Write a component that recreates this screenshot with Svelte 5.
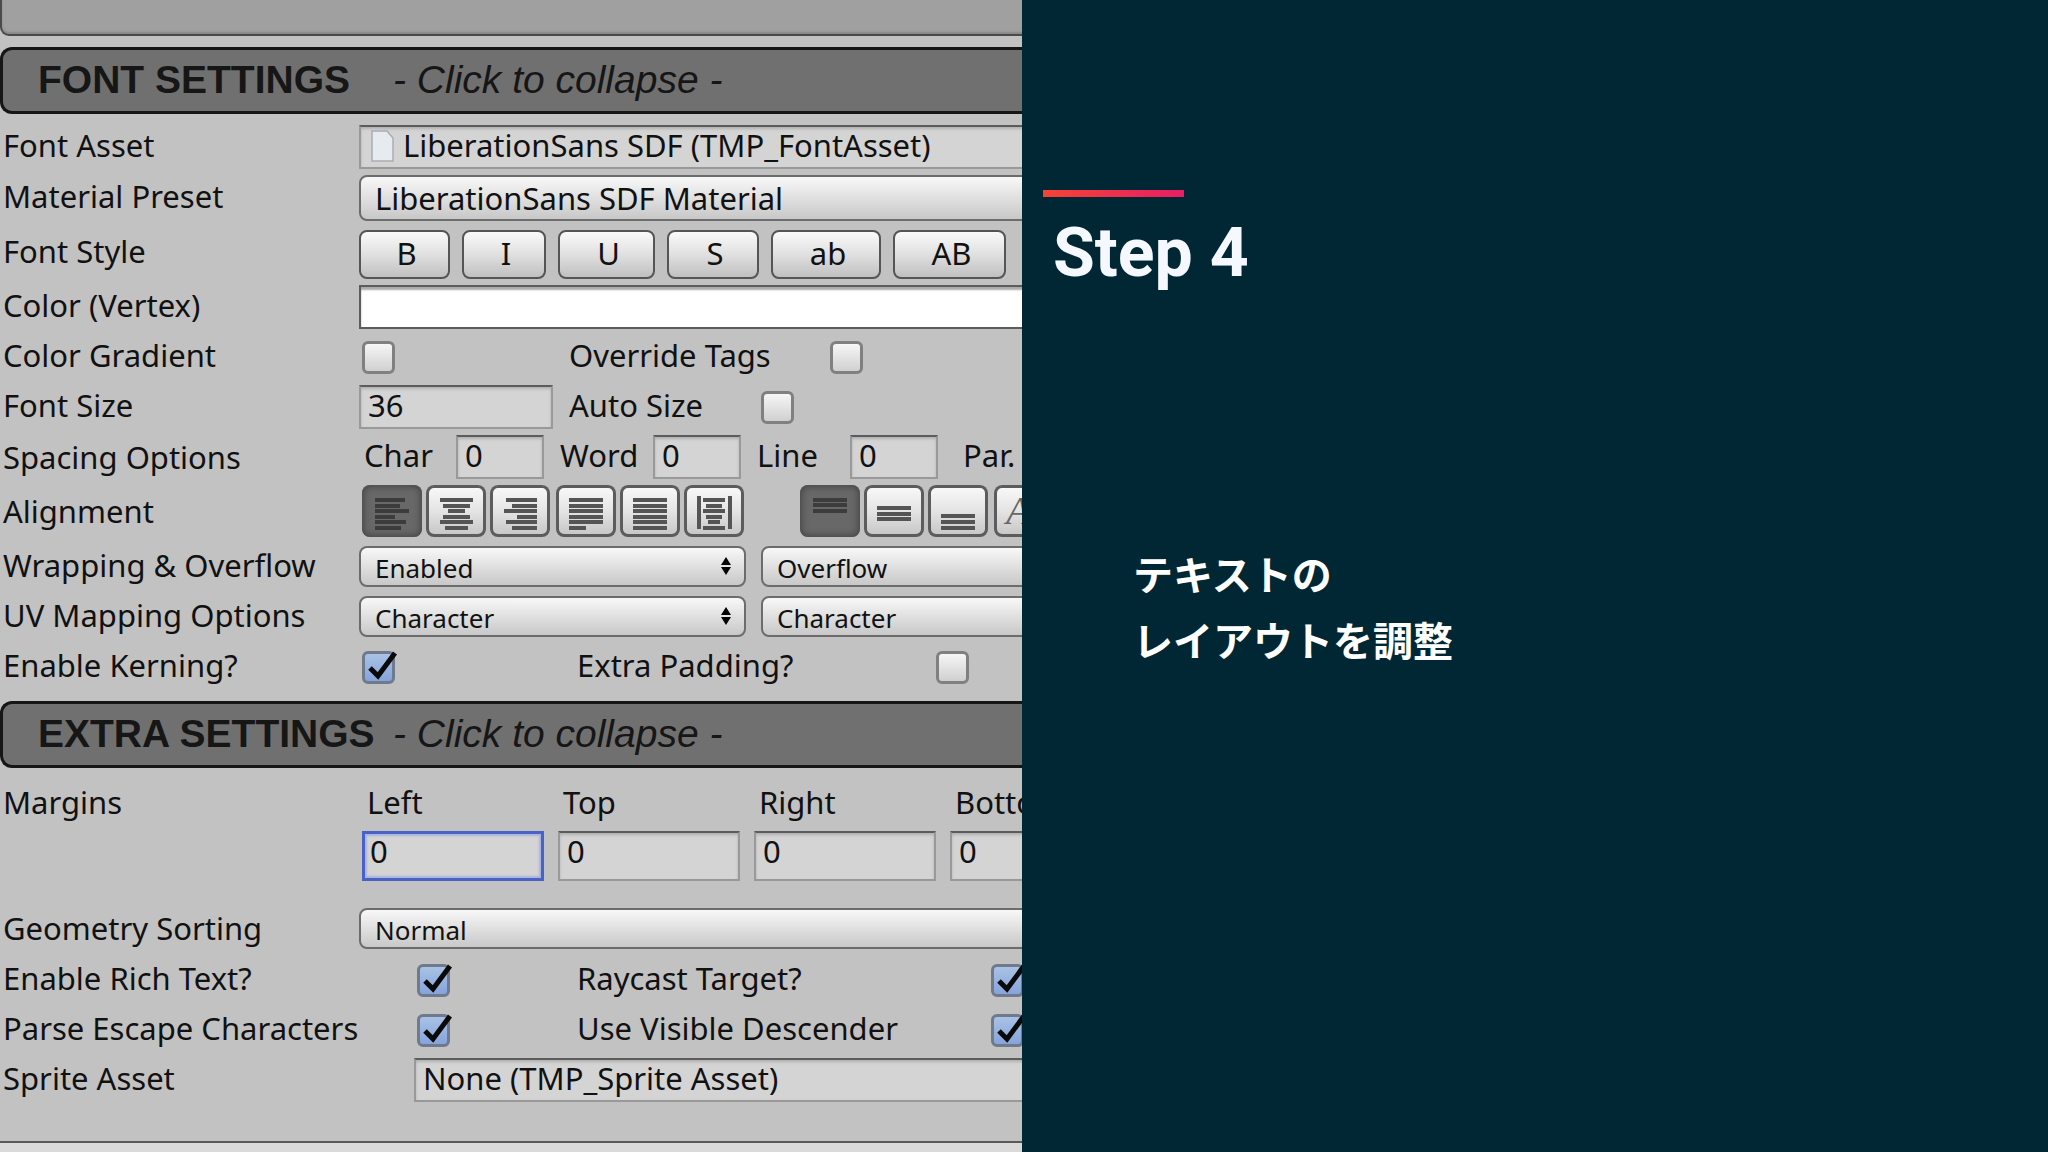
<script>
    let kerning = true;
    let richText = true;
    let parseEscape = true;
    let raycast = true;
    let descender = true;
    let horizontal = "left";
    let vertical = "top";

    const styles = [
        { text: "B", width: 91 },
        { text: "I", width: 84 },
        { text: "U", width: 97 },
        { text: "S", width: 92 },
        { text: "ab", width: 110 },
        { text: "AB", width: 113 },
    ];

    // each line is [x1, x2, y]
    const horizontalAlign = [
        {
            name: "left",
            lines: [[13, 43, 15], [13, 38, 21], [13, 47, 26], [13, 33, 32], [13, 44, 37], [13, 39, 43]],
        },
        {
            name: "center",
            lines: [[14, 47, 15], [17, 44, 21], [22, 39, 26], [17, 44, 32], [14, 47, 37], [19, 42, 43]],
        },
        {
            name: "right",
            lines: [[16, 47, 15], [22, 47, 21], [14, 47, 26], [27, 47, 32], [16, 47, 37], [22, 47, 43]],
        },
        {
            name: "justified",
            lines: [[13, 47, 15], [13, 47, 21], [13, 47, 26], [13, 47, 32], [13, 47, 37], [13, 30, 43]],
        },
        {
            name: "flush",
            lines: [[13, 47, 15], [13, 47, 21], [13, 47, 26], [13, 47, 32], [13, 47, 37], [13, 47, 43]],
        },
        {
            name: "geometry",
            bars: true,
            lines: [[19, 41, 15], [22, 38, 21], [19, 41, 26], [22, 38, 32], [24, 36, 37], [19, 41, 43]],
        },
    ];

    const verticalAlign = [
        { name: "top", lines: [[13, 47, 15], [13, 47, 20], [13, 47, 26]] },
        { name: "middle", lines: [[13, 47, 23], [13, 47, 29], [13, 47, 34]] },
        { name: "bottom", lines: [[13, 47, 31], [13, 47, 37], [13, 47, 43]] },
    ];

    const spacing = ["Char", "Word", "Line", "Par."];
    const margins = ["Left", "Top", "Right", "Bottom"];
</script>

<main>
    <section class="inspector">
        <div class="sheet">
            <div class="textbox"></div>

            <button class="header">
                <b>FONT SETTINGS</b>
                <i>- Click to collapse -</i>
            </button>

            <div class="rows">
                <div class="row">
                    <label for="asset">Font Asset</label>
                    <div class="field object">
                        <svg width="24" height="32" viewBox="0 0 24 32">
                            <path d="M1 1h15l6 7v23H1z" fill="#e6ebf0" stroke="#a9adb2" stroke-width="1.5" />
                        </svg>
                        <input id="asset" value="LiberationSans SDF (TMP_FontAsset)" />
                    </div>
                </div>
                <div class="row">
                    <label for="preset">Material Preset</label>
                    <div class="drop large">
                        <select id="preset"><option>LiberationSans SDF Material</option></select>
                    </div>
                </div>
                <div class="row style-row">
                    <span class="label">Font Style</span>
                    <div class="styles">
                        {#each styles as s}
                            <button style="width: {s.width}px">{s.text}</button>
                        {/each}
                    </div>
                </div>
                <div class="row">
                    <span class="label">Color (Vertex)</span>
                    <button class="color" aria-label="Color (Vertex)"></button>
                </div>
                <div class="row">
                    <label for="gradient">Color Gradient</label>
                    <div class="checks override">
                        <span class="check"><input id="gradient" type="checkbox" /></span>
                        <label for="override">Override Tags</label>
                        <span class="check"><input id="override" type="checkbox" /></span>
                    </div>
                </div>
                <div class="row">
                    <label for="size">Font Size</label>
                    <div class="checks auto">
                        <input id="size" class="field" value="36" />
                        <label for="auto">Auto Size</label>
                        <span class="check"><input id="auto" type="checkbox" /></span>
                    </div>
                </div>
                <div class="row low">
                    <span class="label">Spacing Options</span>
                    <div class="spacing">
                        {#each spacing as name}
                            <label for={name}>{name}</label>
                            <input id={name} class="field" value="0" />
                        {/each}
                    </div>
                </div>
                <div class="row low">
                    <span class="label">Alignment</span>
                    <div class="align">
                        {#each [horizontalAlign.slice(0, 3), horizontalAlign.slice(3)] as group}
                            <div class="group">
                                {#each group as a}
                                    <button
                                        class:on={horizontal === a.name}
                                        aria-label={a.name}
                                        on:click={() => (horizontal = a.name)}
                                    >
                                        <svg width="60" height="52" viewBox="0 0 60 52">
                                            {#each a.lines as [x1, x2, y]}
                                                <path d="M{x1} {y}H{x2}" />
                                            {/each}
                                            {#if a.bars}
                                                <path d="M15 11V44M46 11V44" />
                                            {/if}
                                        </svg>
                                    </button>
                                {/each}
                            </div>
                        {/each}
                        <div class="group vertical">
                            {#each verticalAlign as a}
                                <button
                                    class:on={vertical === a.name}
                                    aria-label={a.name}
                                    on:click={() => (vertical = a.name)}
                                >
                                    <svg width="60" height="52" viewBox="0 0 60 52">
                                        {#each a.lines as [x1, x2, y]}
                                            <path d="M{x1} {y}H{x2}" />
                                        {/each}
                                    </svg>
                                </button>
                            {/each}
                        </div>
                        <div class="group">
                            <button class="baseline">A</button>
                        </div>
                    </div>
                </div>
                <div class="row low">
                    <label for="wrapping">Wrapping &amp; Overflow</label>
                    <div class="pair">
                        <div class="drop">
                            <select id="wrapping"><option>Enabled</option></select>
                            <svg width="10" height="18" viewBox="0 0 10 18"><path d="M5 0l5 8H0zM5 18l5-8H0z" /></svg>
                        </div>
                        <div class="drop">
                            <select aria-label="Overflow"><option>Overflow</option></select>
                        </div>
                    </div>
                </div>
                <div class="row low">
                    <label for="uv">UV Mapping Options</label>
                    <div class="pair">
                        <div class="drop">
                            <select id="uv"><option>Character</option></select>
                            <svg width="10" height="18" viewBox="0 0 10 18"><path d="M5 0l5 8H0zM5 18l5-8H0z" /></svg>
                        </div>
                        <div class="drop">
                            <select aria-label="UV vertical"><option>Character</option></select>
                        </div>
                    </div>
                </div>
                <div class="row low">
                    <label for="kerning">Enable Kerning?</label>
                    <div class="checks padding">
                        <span class="check">
                            <input id="kerning" type="checkbox" bind:checked={kerning} />
                            {#if kerning}
                                <svg viewBox="0 0 36 36"><path d="M8 19l8 8L33 4" /></svg>
                            {/if}
                        </span>
                        <label for="extra">Extra Padding?</label>
                        <span class="check"><input id="extra" type="checkbox" /></span>
                    </div>
                </div>
            </div>

            <button class="header">
                <b>EXTRA SETTINGS</b>
                <i>- Click to collapse -</i>
            </button>

            <div class="rows extra">
                <div class="row margins-row">
                    <span class="label">Margins</span>
                    <div class="margins">
                        {#each margins as name, i}
                            <div>
                                <label for={name}>{name}</label>
                                <input id={name} class="field" class:focused={i === 0} value="0" />
                            </div>
                        {/each}
                    </div>
                </div>
                <div class="row sorting">
                    <label for="sorting">Geometry Sorting</label>
                    <div class="drop">
                        <select id="sorting"><option>Normal</option></select>
                    </div>
                </div>
                <div class="row">
                    <label for="rich">Enable Rich Text?</label>
                    <div class="checks wide">
                        <span class="check">
                            <input id="rich" type="checkbox" bind:checked={richText} />
                            {#if richText}
                                <svg viewBox="0 0 36 36"><path d="M8 19l8 8L33 4" /></svg>
                            {/if}
                        </span>
                        <label for="raycast">Raycast Target?</label>
                        <span class="check">
                            <input id="raycast" type="checkbox" bind:checked={raycast} />
                            {#if raycast}
                                <svg viewBox="0 0 36 36"><path d="M8 19l8 8L33 4" /></svg>
                            {/if}
                        </span>
                    </div>
                </div>
                <div class="row">
                    <label for="parse">Parse Escape Characters</label>
                    <div class="checks wide">
                        <span class="check">
                            <input id="parse" type="checkbox" bind:checked={parseEscape} />
                            {#if parseEscape}
                                <svg viewBox="0 0 36 36"><path d="M8 19l8 8L33 4" /></svg>
                            {/if}
                        </span>
                        <label for="descender">Use Visible Descender</label>
                        <span class="check">
                            <input id="descender" type="checkbox" bind:checked={descender} />
                            {#if descender}
                                <svg viewBox="0 0 36 36"><path d="M8 19l8 8L33 4" /></svg>
                            {/if}
                        </span>
                    </div>
                </div>
                <div class="row sprite">
                    <label for="sprite">Sprite Asset</label>
                    <input id="sprite" class="field" value="None (TMP_Sprite Asset)" />
                </div>
            </div>
            <div class="footer"></div>
        </div>
    </section>

    <section class="slide">
        <div class="accent"></div>
        <h1>Step 4</h1>
        <p>テキストの<br />レイアウトを調整</p>
    </section>
</main>

<style>
    :global(body) {
        background: #012734;
    }

    main {
        display: flex;
        min-height: 100vh;
        overflow: hidden;
    }

    .inspector {
        flex: 0 0 49.9%;
        overflow: hidden;
        background: #c2c2c2;
        color: #111;
        font-family: "Noto Sans", "Liberation Sans", sans-serif;
        font-size: 31px;
        line-height: 40px;
    }
    .sheet {
        display: flex;
        flex-direction: column;
        width: 116%;
        min-height: 100vh;
    }

    button,
    input,
    select {
        box-sizing: border-box;
        margin: 0;
        font: inherit;
        color: inherit;
    }

    .textbox {
        box-sizing: border-box;
        height: 36px;
        margin-bottom: 11px;
        border: 2px solid #4a4a4a;
        border-top: 0;
        border-radius: 0 0 9px 9px;
        background: #a0a0a0;
        box-shadow: inset 0 -2px 2px #888;
    }

    .header {
        display: grid;
        grid-template-columns: 355px 1fr;
        align-items: center;
        height: 67px;
        padding: 0 0 2px 35px;
        border: 3px solid #161616;
        border-right: 0;
        border-radius: 12px;
        background: #707070;
        color: #161616;
        font-family: "Liberation Sans", Arial, sans-serif;
        font-size: 39px;
        text-align: left;
    }

    .rows {
        display: flex;
        flex-direction: column;
        gap: 6px;
        padding: 11px 0 14px;
    }
    .row {
        display: grid;
        grid-template-columns: 359px 1fr;
        align-items: end;
        min-height: 44px;
    }
    .row > label,
    .row > .label {
        align-self: center;
        padding: 0 0 4px 3px;
        white-space: nowrap;
    }
    .low > label,
    .low > .label {
        padding-bottom: 0;
    }

    .field {
        height: 44px;
        padding: 0 7px 4px;
        border: 2px solid #999;
        border-top: 2px solid #5c5c5c;
        border-radius: 0;
        outline: none;
        background: #d4d4d4;
        box-shadow: inset 0 2px 3px #b0b0b0;
    }
    .object {
        display: flex;
        align-items: center;
        gap: 8px;
        box-sizing: border-box;
        padding: 0 0 2px 10px;
    }
    .object input {
        flex: 1;
        height: 40px;
        padding: 0 0 2px;
        border: 0;
        outline: none;
        background: none;
    }

    .drop {
        position: relative;
        box-sizing: border-box;
        height: 41px;
        border: 2px solid #6c6c6c;
        border-radius: 8px;
        background: linear-gradient(#f8f8f8, #e0e0e0 50%, #c8c8c8);
        font-size: 26px;
    }
    .drop select {
        display: block;
        width: 100%;
        height: 32px;
        padding: 0 14px;
        appearance: none;
        border: 0;
        outline: none;
        background: none;
    }
    .drop svg {
        position: absolute;
        top: 9px;
        right: 13px;
        pointer-events: none;
    }
    .large {
        height: 46px;
        font-size: 31px;
    }
    .large select {
        height: 42px;
    }
    .pair {
        display: grid;
        grid-template-columns: 387px 387px;
        gap: 15px;
    }

    .style-row {
        min-height: 52px;
    }
    .styles {
        display: flex;
        gap: 12px;
    }
    .styles button {
        height: 49px;
        padding: 0 0 4px 4px;
        border: 2px solid #555;
        border-radius: 8px;
        background: linear-gradient(#fafafa, #e0e0e0 50%, #c0c0c0);
    }
    .color {
        height: 44px;
        border: 2px solid #5c5c5c;
        background: #fff;
        box-shadow: inset 0 3px 2px #aaa;
    }

    .checks {
        display: grid;
        align-items: center;
        height: 44px;
    }
    .checks label {
        padding-bottom: 4px;
        white-space: nowrap;
    }
    .override {
        grid-template-columns: 210px 258px auto;
    }
    .auto {
        grid-template-columns: 210px 189px auto;
    }
    .padding {
        grid-template-columns: 218px 356px auto;
        height: 42px;
    }
    .wide {
        grid-template-columns: 163px 411px auto;
        padding-left: 55px;
    }
    .auto .field {
        width: 194px;
    }
    .check {
        position: relative;
        width: 33px;
        height: 33px;
        margin-left: 3px;
    }
    .check input {
        display: block;
        width: 33px;
        height: 33px;
        appearance: none;
        border: 3px solid #808080;
        border-radius: 6px;
        background: linear-gradient(#f6f6f6, #d0d0d0);
    }
    .check input:checked {
        border-color: #6f7a8c;
        background: linear-gradient(#a9c2e4, #86a4dc);
    }
    .check svg {
        position: absolute;
        top: -2px;
        left: 0;
        width: 36px;
        height: 36px;
        fill: none;
        stroke: #0a0a0a;
        stroke-width: 5;
        pointer-events: none;
    }

    .spacing {
        display: grid;
        grid-template-columns: 92px 104px 93px 104px 93px 113px 93px 88px;
        align-items: center;
        padding-left: 5px;
    }
    .spacing label {
        padding-bottom: 4px;
    }
    .spacing .field {
        width: 88px;
    }

    .align {
        display: flex;
        gap: 6px;
        padding-left: 3px;
    }
    .group {
        display: flex;
        gap: 4px;
    }
    .vertical {
        margin-left: 50px;
    }
    .group button {
        width: 60px;
        height: 52px;
        padding: 0;
        border: 0;
        border-radius: 8px;
        background: linear-gradient(#fafafa, #e4e4e4 50%, #c4c4c4);
        box-shadow: inset 0 0 0 3px #5c5c5c;
    }
    .group button.on {
        background: #686868;
        box-shadow: inset 0 0 6px 2px #484848;
    }
    .group svg {
        display: block;
        stroke: #555;
        stroke-width: 4;
    }
    .on svg {
        stroke: #3c3c3c;
    }
    .group .baseline {
        padding-left: 12px;
        color: #666;
        font-family: "Liberation Serif", serif;
        font-size: 40px;
        font-style: italic;
        text-align: left;
    }

    .extra {
        padding: 14px 0 0;
    }
    .margins-row {
        align-items: start;
        margin-bottom: 21px;
    }
    .row.margins-row > .label {
        align-self: start;
    }
    .margins {
        display: grid;
        grid-template-columns: repeat(4, 182px);
        gap: 14px;
        padding-left: 3px;
    }
    .margins label {
        display: block;
        padding: 0 0 0 5px;
    }
    .margins .field {
        width: 100%;
        height: 50px;
        margin-top: 9px;
        padding-bottom: 10px;
    }
    .margins .focused {
        border: 3px solid #4a62c8;
        padding-left: 5px;
        box-shadow: inset 0 0 2px 2px #a8b4dc;
    }
    .sorting .drop {
        align-self: start;
    }
    .sprite {
        grid-template-columns: 414px 1fr;
    }
    .footer {
        height: 9px;
        margin-top: auto;
        border-top: 2px solid #5a5a5a;
        background: #dadada;
    }

    .slide {
        flex: 1;
        padding: 190px 21px 0;
        background: #012734;
        color: #f6f8ff;
    }
    .accent {
        width: 141px;
        height: 7px;
        background: linear-gradient(90deg, #f44336, #e91e63);
    }
    h1 {
        margin: 0;
        padding: 16px 0 0 10px;
        font-family: Roboto, sans-serif;
        font-size: 68px;
        font-weight: 700;
        line-height: 80px;
    }
    p {
        margin: 0;
        padding: 247px 0 0 90px;
        color: #fff;
        font-family: "Noto Sans CJK JP", sans-serif;
        font-size: 40px;
        font-weight: 700;
        line-height: 66px;
    }
</style>
